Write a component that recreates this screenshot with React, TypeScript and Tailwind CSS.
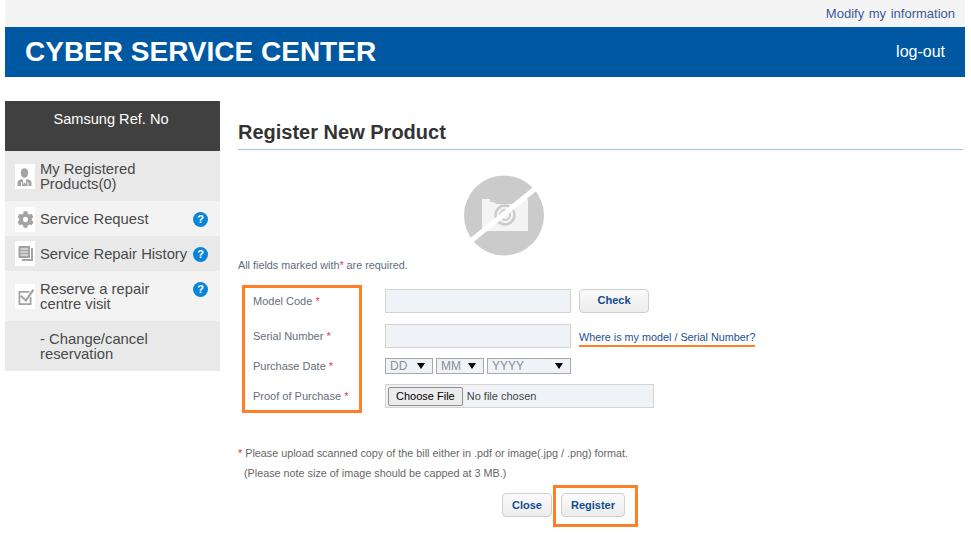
import { FaCog } from 'react-icons/fa';

const menu = [
  { label: 'My Registered Products(0)', icon: 'user', help: false, h: 'h-[50px]', bg: 'bg-[#e9e9e9]', iconTop: 'mt-[13px]' },
  { label: 'Service Request', icon: 'gear', help: true, h: 'h-[35px]', bg: 'bg-[#f3f3f3]', iconTop: 'mt-[6px]' },
  { label: 'Service Repair History', icon: 'docs', help: true, h: 'h-[35px]', bg: 'bg-[#e9e9e9]', iconTop: 'mt-[5px]' },
  { label: 'Reserve a repair centre visit', icon: 'check', help: true, h: 'h-[50px]', bg: 'bg-[#f3f3f3]', iconTop: 'mt-[13px]' },
  { label: '- Change/cancel reservation', icon: '', help: false, h: 'h-[50px]', bg: 'bg-[#e9e9e9]', iconTop: '' },
];

function MenuIcon({ name, top }: { name: string; top: string }) {
  return (
    <div className={`${top} w-5 h-[25px] bg-white flex items-center justify-center shrink-0`}>
      {name === 'gear' ? (
        <FaCog size={17} color="#a3a3a3" />
      ) : (
        <svg width="20" height="25" viewBox="0 0 20 25" fill="#a3a3a3">
          {name === 'user' && (
            <>
              <ellipse cx="9.500" cy="9" rx="3.700" ry="4.800" />
              <path d="M2.500 22v-3.500c0-2 2-3 5-3.500l1.200 6 .8-3.500.8 3.500 1.200-6c3 .5 5 1.500 5 3.500V22z" />
              <path d="M6 18h1v4H6zM12.500 18h1v4h-1z" fill="#ffffff" />
            </>
          )}
          {name === 'docs' && (
            <>
              <path
                fillRule="evenodd"
                d="M3.500 5H15v12H3.500zM5.500 7.500v1h7.500v-1zM5.500 10.500v1h7.500v-1zM5.500 13.500v1h7.500v-1z"
              />
              <path d="M16 7h2v13H7v-2h9z" />
            </>
          )}
          {name === 'check' && (
            <>
              <path fillRule="evenodd" d="M3.500 7h11v1.800H5.300v10.400h9.400V13h1.800v8h-13z" />
              <path d="M6.500 11l4.200 4L17.500 5l1.800 1.500-8.300 11.500L5 12.500z" />
            </>
          )}
        </svg>
      )}
    </div>
  );
}

function HelpDot() {
  return (
    <div className="mt-[11px] w-[15px] h-[15px] rounded-full bg-[#0a84d8] text-white text-[11px] font-bold flex items-center justify-center shrink-0">
      ?
    </div>
  );
}

function Label({ text }: { text: string }) {
  return (
    <span className="text-[11px] text-[#666e7a] pl-[15px] w-[147px] shrink-0">
      {text} <span className="text-[#e6356b]">*</span>
    </span>
  );
}

function DateSelect({ text, w }: { text: string; w: string }) {
  return (
    <div
      className={`${w} h-4 border border-[#a8a8a8] bg-[#eff3f8] flex items-center justify-between pl-1 pr-[7px] text-[12px] text-[#8a8f96]`}
    >
      <span>{text}</span>
      <span className="w-0 h-0 border-x-[4px] border-x-transparent border-t-[6px] border-t-black" />
    </div>
  );
}

function GreyButton({ text, w }: { text: string; w: string }) {
  return (
    <button
      className={`${w} h-6 rounded border border-[#cfcfcf] bg-gradient-to-b from-[#fbfbfb] to-[#ececec] text-[11px] font-bold text-[#0f4d92]`}
    >
      {text}
    </button>
  );
}

export default function App() {
  return (
    <div className="w-[971px] h-[540px] overflow-hidden bg-white pl-[5px] pr-[6px] font-['Liberation_Sans',Arial,sans-serif]">
      <div className="h-[27px] bg-[#f4f4f4] flex items-center justify-end pr-[10px] text-[13px] [word-spacing:1px] text-[#3b5a9a]">
        Modify my information
      </div>
      <div className="h-[50px] bg-[#0058a3] flex items-center justify-between pl-5 pr-5 text-white">
        <span className="text-[28px] font-bold">CYBER SERVICE CENTER</span>
        <span className="text-[16px]">log-out</span>
      </div>

      <div className="flex mt-6">
        <aside className="w-[215px] shrink-0">
          <div className="h-[50px] bg-[#404040] text-white text-[14.600px] text-center pt-[8px] pr-[3px]">Samsung Ref. No</div>
          {menu.map((item) => (
            <div key={item.label} className={`${item.h} ${item.bg} flex items-start pl-[10px] pr-[12px]`}>
              {item.icon ? <MenuIcon name={item.icon} top={item.iconTop} /> : <div className="w-5 shrink-0" />}
              <span className="flex-1 pl-[5px] pt-[11px] text-[14.800px] leading-[15px] text-[#4a4a4a]">{item.label}</span>
              {item.help && <HelpDot />}
            </div>
          ))}
        </aside>

        <main className="flex-1 pl-[18px] pr-[2px]">
          <h1 className="text-[20px] font-bold text-[#333] leading-[23px] pt-[20px] pb-[5px] border-b border-[#a4c0e4]">
            Register New Product
          </h1>

          <div className="flex pl-[222px] pt-[21px]">
            <svg width="90" height="87" viewBox="0 0 90 87">
              <circle cx="44" cy="44.500" r="40" fill="#cbcbcb" />
              <path d="M22 28h8v3h4l2 2h18l2-2h4v-3h8v32H22z" fill="#f4f4f4" />
              <circle cx="45" cy="44" r="9.500" fill="none" stroke="#cbcbcb" strokeWidth="2.500" />
              <circle cx="45" cy="44" r="5" fill="none" stroke="#cbcbcb" strokeWidth="2" />
              <path d="M38 50 L52 37" stroke="#f4f4f4" strokeWidth="2.500" />
              <path d="M12 69 L76 17" stroke="#ffffff" strokeWidth="5" />
            </svg>
          </div>

          <p className="text-[10.800px] text-[#5f6b7a] leading-[14px]">
            All fields marked with<span className="text-[#e6356b]">*</span> are required.
          </p>

          <div className="relative mt-[17px]">
            <div className="absolute left-[4px] top-[-4px] w-[120px] h-[128px] border-[3px] border-[#ff7f27]" />

            <div className="flex items-center h-6">
              <Label text="Model Code" />
              <div className="w-[186px] h-6 border border-[#d8d2cc] bg-[#eff3f8]" />
              <div className="ml-2 -mt-[2px]">
                <GreyButton text="Check" w="w-[70px]" />
              </div>
            </div>

            <div className="flex items-center h-6 mt-[11px]">
              <Label text="Serial Number" />
              <div className="w-[186px] h-6 border border-[#d8d2cc] bg-[#eff3f8]" />
              <a className="ml-2 text-[10.800px] text-[#1b4f96] border-b-2 border-[#ff7f27] leading-[15px] mt-[3px] pt-[1px]">
                Where is my model / Serial Number?
              </a>
            </div>

            <div className="flex items-center h-4 mt-[10px]">
              <Label text="Purchase Date" />
              <DateSelect text="DD" w="w-12" />
              <div className="ml-[3px]">
                <DateSelect text="MM" w="w-12" />
              </div>
              <div className="ml-[3px]">
                <DateSelect text="YYYY" w="w-[84px]" />
              </div>
            </div>

            <div className="flex items-center h-6 mt-[10px]">
              <Label text="Proof of Purchase" />
              <div className="w-[269px] h-6 border border-[#d8d2cc] bg-[#eff3f8] flex items-center pl-[2px] text-[11px] text-[#444]">
                <div className="h-[19px] px-[7px] border border-[#8f8f8f] rounded-[2px] bg-[#ececec] text-black flex items-center">
                  Choose File
                </div>
                <span className="ml-[4px]">No file chosen</span>
              </div>
            </div>
          </div>

          <p className="text-[10.800px] text-[#666] mt-[35px] leading-[20px]">
            <span className="text-[#c0392b]">*</span> Please upload scanned copy of the bill either in .pdf or image(.jpg / .png) format.
          </p>
          <p className="text-[10.800px] text-[#666] pl-[6px] leading-[20px]">
            (Please note size of image should be capped at 3 MB.)
          </p>

          <div className="relative flex mt-[10px] pl-[264px] gap-[9px]">
            <GreyButton text="Close" w="w-[50px]" />
            <GreyButton text="Register" w="w-[64px]" />
            <div className="absolute left-[315px] top-[-8px] w-[85px] h-[42px] border-[3px] border-[#ff7f27]" />
          </div>
        </main>
      </div>
    </div>
  );
}
